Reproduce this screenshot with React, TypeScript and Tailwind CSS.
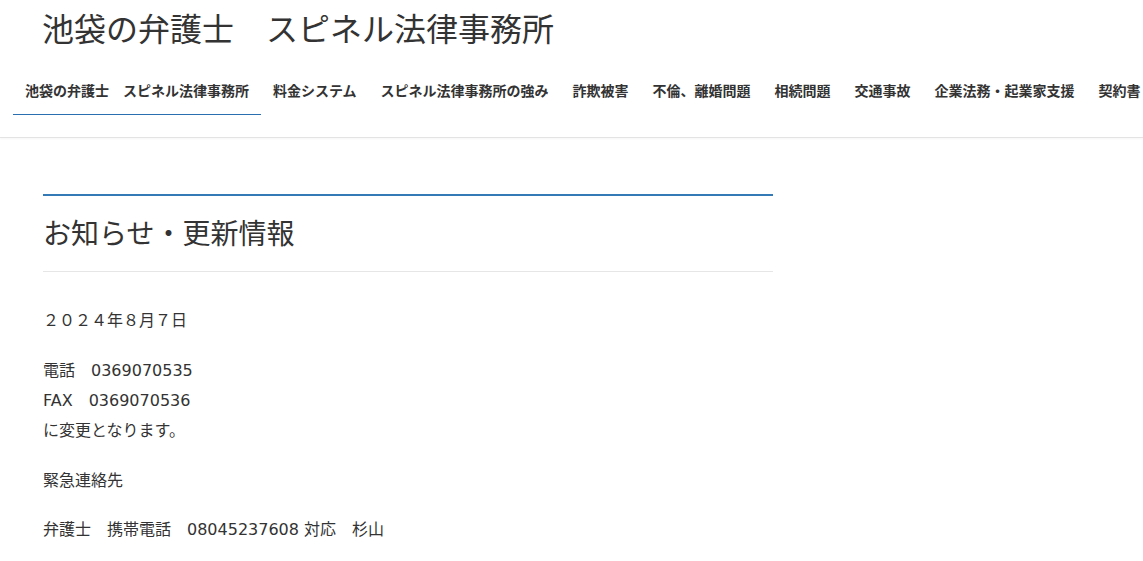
import React from 'react';

const navItems = [
  '池袋の弁護士　スピネル法律事務所',
  '料金システム',
  'スピネル法律事務所の強み',
  '詐欺被害',
  '不倫、離婚問題',
  '相続問題',
  '交通事故',
  '企業法務・起業家支援',
  '契約書',
];

export default function App() {
  return (
    <div className="min-h-screen bg-white text-[#333] font-['Noto_Sans_CJK_JP','Noto_Sans',sans-serif]">
      {/* Site header */}
      <header className="border-b border-[#e3e3e3] shadow-[0_1px_2px_rgba(0,0,0,0.04)] pb-[22px]">
        <div className="h-[54px] pl-[42px] flex items-center">
          <h1 className="text-[32px] leading-none font-normal text-[#333] whitespace-nowrap">
            池袋の弁護士　スピネル法律事務所
          </h1>
        </div>
        <nav className="mt-[12px] pl-[13px] overflow-hidden">
          <ul className="flex whitespace-nowrap">
            {navItems.map((item, i) => (
              <li
                key={item}
                className={`h-[49px] px-3 flex items-center text-[14px] font-bold border-b ${
                  i === 0 ? 'border-[#2a6fb0]' : 'border-transparent'
                }`}
              >
                {item}
              </li>
            ))}
          </ul>
        </nav>
      </header>

      {/* News section */}
      <main className="pl-[43px] pt-[56px]">
        <section className="w-[730px]">
          <div className="border-t-2 border-[#337ab7] border-b border-b-[#e6e6e6] pt-[15px] pb-[18px]">
            <h2 className="text-[28px] leading-[42px] font-normal">お知らせ・更新情報</h2>
          </div>
          <div className="pt-[34px] text-[16px] leading-[30px] font-['DejaVu_Sans','Noto_Sans_CJK_JP',sans-serif]">
            <p>２０２４年８月７日</p>
            <p className="mt-[20px]">
              電話　0369070535
              <br />
              FAX　0369070536
              <br />
              に変更となります。
            </p>
            <p className="mt-[20px]">緊急連絡先</p>
            <p className="mt-[19px]">弁護士　携帯電話　08045237608 対応　杉山</p>
          </div>
        </section>
      </main>
    </div>
  );
}
